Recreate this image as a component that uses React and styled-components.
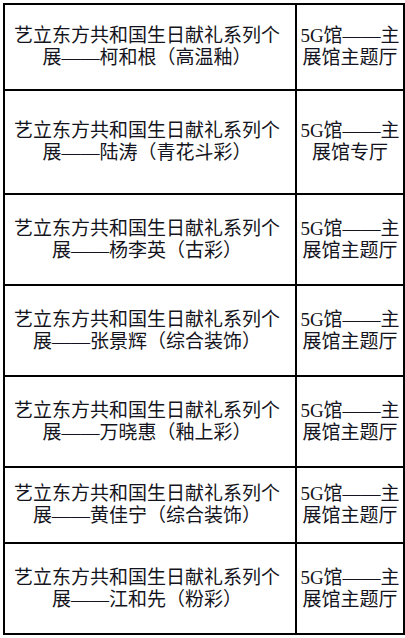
import React from 'react';
import styled, { createGlobalStyle } from 'styled-components';

const GlobalStyle = createGlobalStyle`
  html, body {
    margin: 0;
    padding: 0;
    background: #ffffff;
  }
`;

const Table = styled.div`
  display: grid;
  grid-template-columns: 292px 108px;
  margin: 3px 0 0 3px;
  width: 402px;
  border-left: 2px solid #000;
  border-top: 2px solid #000;
  box-sizing: border-box;
  font-family: "Liberation Serif", "Noto Sans CJK SC", serif;
  font-size: 19px;
  line-height: 22px;
  color: #141420;
`;

const Cell = styled.div`
  display: flex;
  align-items: center;
  justify-content: center;
  box-sizing: border-box;
  height: ${(p) => p.h}px;
  border-right: 2px solid #000;
  border-bottom: 2px solid #000;
  text-align: center;
  padding: ${(p) => (p.narrow ? '0 2px' : '0 10px 0 4px')};
  word-break: break-all;
`;

const rows = [
  { name: '柯和根（高温釉）', hall: '5G馆——主展馆主题厅', h: 86 },
  { name: '陆涛（青花斗彩）', hall: '5G馆——主展馆专厅', h: 104 },
  { name: '杨李英（古彩）', hall: '5G馆——主展馆主题厅', h: 91 },
  { name: '张景辉（综合装饰）', hall: '5G馆——主展馆主题厅', h: 91 },
  { name: '万晓惠（釉上彩）', hall: '5G馆——主展馆主题厅', h: 91 },
  { name: '黄佳宁（综合装饰）', hall: '5G馆——主展馆主题厅', h: 76 },
  { name: '江和先（粉彩）', hall: '5G馆——主展馆主题厅', h: 91 },
];

const App = () => {
  return (
    <>
      <GlobalStyle />
      <Table>
        {rows.map((r, i) => (
          <React.Fragment key={i}>
            <Cell h={r.h}>艺立东方共和国生日献礼系列个展——{r.name}</Cell>
            <Cell h={r.h} narrow>{r.hall}</Cell>
          </React.Fragment>
        ))}
      </Table>
    </>
  );
};

export default App;
